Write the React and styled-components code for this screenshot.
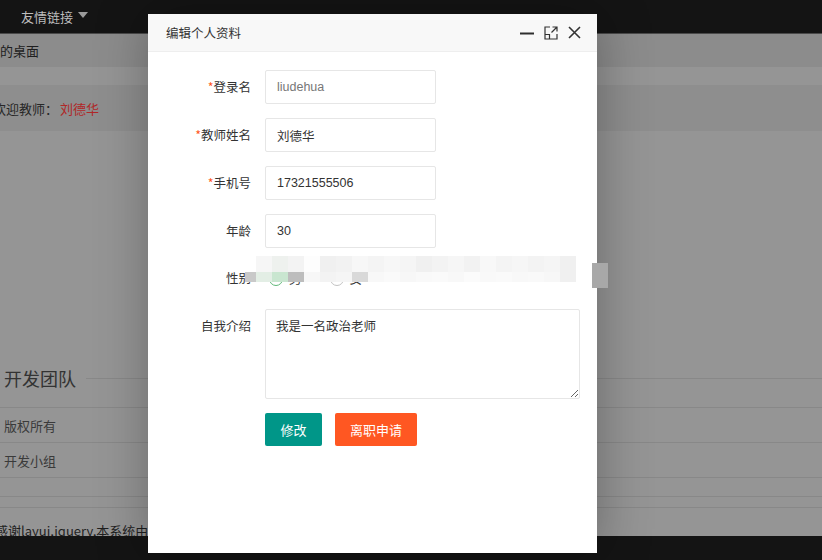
import React from "react";
import styled, { createGlobalStyle } from "styled-components";

const GlobalStyle = createGlobalStyle`
  html, body { margin: 0; padding: 0; }
  body {
    font-family: "Noto Sans CJK SC", "Liberation Sans", sans-serif;
    overflow: hidden;
  }
`;

const Page = styled.div`
  position: relative;
  width: 822px;
  height: 560px;
  overflow: hidden;
  background: #959595;
  display: flex;
  flex-direction: column;
`;

const TopBar = styled.div`
  height: 33px;
  flex: none;
  background: #141414;
  border-bottom: 1px solid #4a4a4a;
  display: flex;
  align-items: center;
  padding-left: 21px;
`;

const NavItem = styled.span`
  color: #bdbdbd;
  font-size: 13px;
  display: flex;
  align-items: center;
  gap: 5px;
`;

const Caret = styled.span`
  width: 0;
  height: 0;
  border-left: 5px solid transparent;
  border-right: 5px solid transparent;
  border-top: 6px solid #9a9a9a;
  margin-top: -3px;
`;

const TabBar = styled.div`
  height: 33px;
  flex: none;
  background: #8c8c8c;
  display: flex;
  align-items: center;
  color: #1e1e1e;
  font-size: 13px;
  text-indent: -13px;
`;

const Band = styled.div`
  height: ${(p) => p.h}px;
  flex: none;
  background: ${(p) => p.bg || "#959595"};
`;

const Welcome = styled.div`
  height: 46px;
  flex: none;
  background: #8e8e8e;
  display: flex;
  align-items: center;
  color: #262626;
  font-size: 13px;
  text-indent: -7px;
`;

const Red = styled.span`
  color: #b02828;
  margin-left: 9px;
`;

const Legend = styled.div`
  margin-top: 234px;
  height: 26px;
  display: flex;
  align-items: center;
  gap: 10px;
  padding-left: 4px;
  font-size: 18px;
  color: #333;
  &::after {
    content: "";
    flex: 1;
    height: 1px;
    background: #888;
  }
`;

const Table = styled.div`
  margin-top: 16px;
  display: flex;
  flex-direction: column;
`;

const Row = styled.div`
  height: ${(p) => p.h || 34}px;
  border-top: 1px solid #888;
  display: flex;
  align-items: center;
  padding-left: 4px;
  font-size: 13px;
  color: #3a3a3a;
`;

const Footer = styled.div`
  margin-top: 12px;
  height: 18px;
  font-size: 13px;
  color: #1f1f1f;
  white-space: nowrap;
  overflow: hidden;
  text-indent: -5px;
`;

const BottomBar = styled.div`
  margin-top: auto;
  height: 24px;
  flex: none;
  background: #141414;
`;

/* modal layer */
const Dialog = styled.div`
  position: absolute;
  left: 148px;
  top: 14px;
  width: 449px;
  height: 539px;
  background: #fff;
  box-shadow: 1px 1px 50px rgba(0, 0, 0, 0.3);
  display: flex;
  flex-direction: column;
`;

const DialogHead = styled.div`
  height: 37px;
  flex: none;
  background: #f8f8f8;
  border-bottom: 1px solid #eee;
  display: flex;
  align-items: center;
  padding: 0 16px 0 18px;
  font-size: 12.5px;
  color: #333;
`;

const Title = styled.span`
  flex: 1;
`;

const Tools = styled.div`
  display: flex;
  align-items: center;
  gap: 10px;
`;

const Form = styled.form`
  padding-top: 18px;
  display: flex;
  flex-direction: column;
  gap: 14px;
`;

const Item = styled.div`
  position: relative;
  display: flex;
  align-items: ${(p) => (p.top ? "flex-start" : "center")};
  gap: 14px;
  height: ${(p) => (p.top ? "auto" : "34px")};
  margin-top: ${(p) => (p.top ? "-1px" : "0")};
`;

const Label = styled.label`
  width: 103px;
  flex: none;
  text-align: right;
  font-size: 12.5px;
  line-height: 18px;
  color: #333;
  padding-top: ${(p) => (p.top ? "8px" : "0")};
  margin-top: ${(p) => (p.up ? "-3px" : "0")};
`;

const Star = styled.span`
  color: #ff5722;
`;

const Input = styled.input`
  box-sizing: border-box;
  width: 171px;
  height: 34px;
  border: 1px solid #e6e6e6;
  border-radius: 2px;
  padding: 0 11px;
  font-family: "Liberation Sans", "Noto Sans CJK SC", sans-serif;
  font-size: 12.5px;
  color: ${(p) => (p.muted ? "#777" : "#333")};
  outline: none;
`;

const Radios = styled.div`
  display: flex;
  align-items: center;
  gap: 6px;
  font-size: 12.5px;
  color: #333;
  padding-left: 4px;
  margin-top: -1px;
`;

const Radio = styled.span`
  width: 14px;
  height: 14px;
  border-radius: 50%;
  border: 1px solid ${(p) => (p.on ? "#5fb878" : "#c2c2c2")};
  box-sizing: border-box;
  margin-left: ${(p) => p.ml || 0}px;
`;

const Mosaic = styled.div`
  position: absolute;
  left: 97px;
  top: -6px;
  display: grid;
  grid-template-columns: 11px repeat(20, 16px);
  grid-template-rows: 16px 10px;
`;

const Tile = styled.span`
  background: ${(p) => p.c};
`;

const Stray = styled.span`
  position: absolute;
  left: 444px;
  top: 1px;
  width: 16px;
  height: 25px;
  background: #a8a8a8;
`;

const TextArea = styled.textarea`
  display: block;
  box-sizing: border-box;
  width: 315px;
  height: 90px;
  border: 1px solid #e6e6e6;
  border-radius: 2px;
  padding: 6px 10px;
  font-family: "Noto Sans CJK SC", sans-serif;
  font-size: 12.5px;
  line-height: 20px;
  color: #333;
  outline: none;
  resize: both;
`;

const Actions = styled.div`
  display: flex;
  gap: 13px;
  padding-left: 117px;
  margin-top: 0;
`;

const Button = styled.button`
  height: 33px;
  width: ${(p) => p.w}px;
  border: none;
  border-radius: 2px;
  background: ${(p) => p.bg};
  color: #fff;
  font-family: "Noto Sans CJK SC", sans-serif;
  font-size: 13px;
  cursor: pointer;
`;

const topRow = [
  "#fff", "#f6f6f6", "#eef1ee", "#f3f3f3", "#fdfdfd", "#f0f0f0", "#f2f2f2",
  "#f7f7f7", "#f4f4f4", "#f7f7f7", "#f5f5f5", "#f0f0f0", "#f3f3f3", "#f6f6f6",
  "#f2f2f2", "#f8f8f8", "#f4f4f4", "#f6f6f6", "#f3f3f3", "#f5f5f5", "#f0f0f0",
];
const bottomRow = [
  "#c9c9c9", "#e3eee5", "#c9e6d0", "#bdbdbd", "#f7f7f7", "#f3f3f3", "#f5f5f5",
  "#d9d9d9", "#f8f8f8", "#fafafa", "#f7f7f7", "#f9f9f9", "#fafafa", "#f8f8f8",
  "#fbfbfb", "#f9f9f9", "#fafafa", "#f8f8f8", "#f9f9f9", "#f7f7f7", "#f0f0f0",
];

const MinIcon = () => (
  <svg width="14" height="14" viewBox="0 0 14 14">
    <path d="M0 7.5H14" stroke="#2e2e2e" strokeWidth="2" />
  </svg>
);

const MaxIcon = () => (
  <svg width="14" height="14" viewBox="0 0 14 14" fill="none" stroke="#333" strokeWidth="1.2">
    <path d="M6 1H1V13H13V8" />
    <path d="M8.5 1H13V5.5M13 1L7.5 6.5" />
    <path d="M1 8.5H5.5V13" />
  </svg>
);

const CloseIcon = () => (
  <svg width="13" height="13" viewBox="0 0 13 13" stroke="#333" strokeWidth="1.6">
    <path d="M1 1L12 12M12 1L1 12" />
  </svg>
);

export default function App() {
  return (
    <>
      <GlobalStyle />
      <Page>
        <TopBar>
          <NavItem>
            友情链接 <Caret />
          </NavItem>
        </TopBar>
        <TabBar>我的桌面</TabBar>
        <Band h={18} />
        <Welcome>
          欢迎教师：<Red>刘德华</Red>
        </Welcome>
        <Legend>开发团队</Legend>
        <Table>
          <Row>版权所有</Row>
          <Row>开发小组</Row>
          <Row h={18} />
          <Row h={10} />
          <Row h={1} />
        </Table>
        <Footer>感谢layui,jquery,本系统由x-admin提供技术支持。</Footer>
        <BottomBar />

        <Dialog>
          <DialogHead>
            <Title>编辑个人资料</Title>
            <Tools>
              <MinIcon />
              <MaxIcon />
              <CloseIcon />
            </Tools>
          </DialogHead>
          <Form>
            <Item>
              <Label>
                <Star>*</Star>登录名
              </Label>
              <Input muted defaultValue="liudehua" />
            </Item>
            <Item>
              <Label>
                <Star>*</Star>教师姓名
              </Label>
              <Input defaultValue="刘德华" />
            </Item>
            <Item>
              <Label>
                <Star>*</Star>手机号
              </Label>
              <Input defaultValue="17321555506" />
            </Item>
            <Item>
              <Label>年龄</Label>
              <Input defaultValue="30" />
            </Item>
            <Item>
              <Label up>性别</Label>
              <Radios>
                <Radio on />男<Radio ml={22} />女
              </Radios>
              <Mosaic>
                {topRow.map((c, i) => (
                  <Tile key={"t" + i} c={i === 0 ? "transparent" : c} />
                ))}
                {bottomRow.map((c, i) => (
                  <Tile key={"b" + i} c={c} />
                ))}
              </Mosaic>
              <Stray />
            </Item>
            <Item top>
              <Label top>自我介绍</Label>
              <TextArea defaultValue="我是一名政治老师" />
            </Item>
            <Actions>
              <Button type="button" w={57} bg="#009688">
                修改
              </Button>
              <Button type="button" w={82} bg="#ff5722">
                离职申请
              </Button>
            </Actions>
          </Form>
        </Dialog>
      </Page>
    </>
  );
}
